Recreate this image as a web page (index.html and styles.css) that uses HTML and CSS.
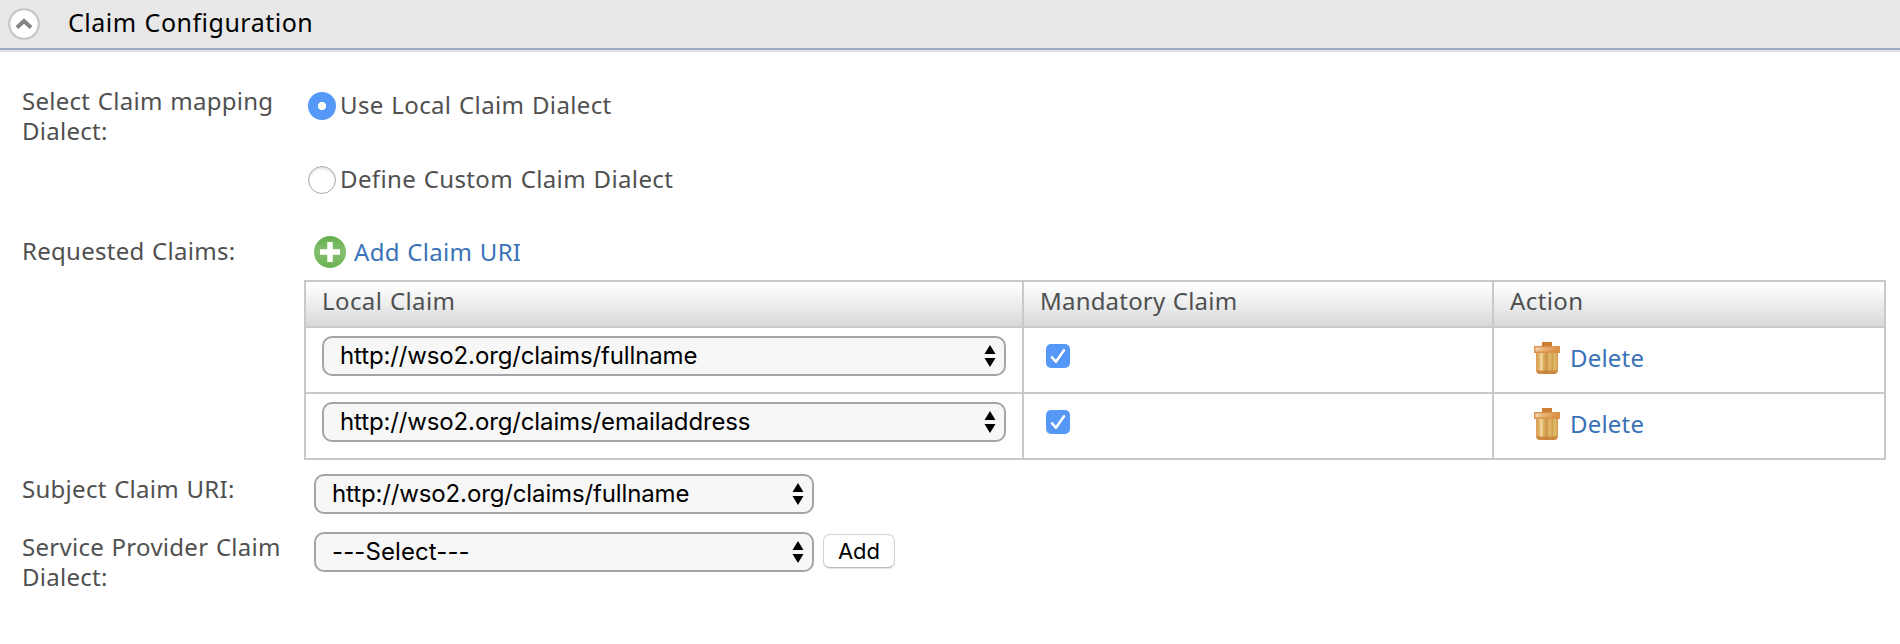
FILE: index.html
```html
<!DOCTYPE html>
<html lang="en">
<head>
<meta charset="utf-8">
<title>Claim Configuration</title>
<link rel="stylesheet" href="styles.css">
</head>
<body>
<svg class="defs" width="0" height="0" aria-hidden="true">
  <defs>
    <linearGradient id="wood" x1="0" x2="1" y1="0" y2="0">
      <stop offset="0" stop-color="#d9a05c"/><stop offset=".12" stop-color="#e0a95e"/>
      <stop offset=".24" stop-color="#f3dca4"/><stop offset=".36" stop-color="#d9ab5a"/>
      <stop offset=".5" stop-color="#cc9148"/><stop offset=".62" stop-color="#e2bd69"/>
      <stop offset=".74" stop-color="#cfa04f"/><stop offset=".87" stop-color="#e0bf6c"/>
      <stop offset="1" stop-color="#cf9048"/>
    </linearGradient>
    <linearGradient id="lid" x1="0" x2="1" y1="0" y2=".3">
      <stop offset="0" stop-color="#f8e4cc"/><stop offset=".45" stop-color="#e9b478"/><stop offset="1" stop-color="#d98f40"/>
    </linearGradient>
    <linearGradient id="leaf" x1="0" x2="0" y1="0" y2="1">
      <stop offset="0" stop-color="#64b04d"/><stop offset=".5" stop-color="#85c070"/><stop offset="1" stop-color="#69b352"/>
    </linearGradient>
    <symbol id="trash" viewBox="0 0 26 32">
      <path d="M8 4V0h10v4z" fill="#cf7f35"/>
      <path d="M2 10h22v18q0 4-4 4H6q-4 0-4-4z" fill="url(#wood)"/>
      <path d="M2.500 28.500h21q-.5 3.500-3.500 3.500H6q-3 0-3.500-3.500z" fill="#c9823a" opacity=".85"/>
      <path d="M.7 4.700h24.600v5.600H.7z" fill="url(#lid)" stroke="#d9934d" stroke-width="1.400"/>
    </symbol>
    <symbol id="updown" viewBox="0 0 12 22">
      <path d="M6 0l5.500 9H.5zM6 22L.5 13h11z"/>
    </symbol>
    <symbol id="tick" viewBox="0 0 24 24">
      <path d="M6 14.300l4 4.500L18 7.300" fill="none" stroke="#3d78c4" stroke-opacity=".5" stroke-width="2.600" stroke-linecap="round" stroke-linejoin="round"/>
      <path d="M6 13.300l4 4.500L18 6.300" fill="none" stroke="#fff" stroke-width="2.600" stroke-linecap="round" stroke-linejoin="round"/>
    </symbol>
  </defs>
</svg>

<header class="section-head">
  <svg class="collapse" viewBox="0 0 32 32">
    <circle cx="16" cy="16" r="14.800" fill="#fff" stroke="#c3c3c3" stroke-width="2"/>
    <path d="M9 19.500L16 13l7 6.500" fill="none" stroke="#858585" stroke-width="4"/>
  </svg>
  <h2 class="title">Claim Configuration</h2>
</header>

<main class="form">
  <div class="row row-dialect">
    <div class="label">Select Claim mapping Dialect:</div>
    <div class="radios">
      <label class="radio"><span class="dot dot-on"></span><span>Use Local Claim Dialect</span></label>
      <label class="radio"><span class="dot"></span><span>Define Custom Claim Dialect</span></label>
    </div>
  </div>

  <div class="row row-claims">
    <div class="label">Requested Claims:</div>
    <div class="claims">
      <a class="add-link">
        <svg class="plus" viewBox="0 0 32 32"><circle cx="16" cy="16" r="16" fill="url(#leaf)"/><path d="M16 6v20M6 16h20" stroke="#fff" stroke-width="5.500"/></svg>
        <span>Add Claim URI</span>
      </a>
      <div class="table">
        <div class="th">Local Claim</div><div class="th th-tight">Mandatory Claim</div><div class="th">Action</div>
        <div class="td"><div class="select"><span>http://wso2.org/claims/fullname</span><svg class="arrows"><use href="#updown"/></svg></div></div>
        <div class="td"><div class="check"><svg><use href="#tick"/></svg></div></div>
        <div class="td"><a class="delete"><svg class="bin"><use href="#trash"/></svg><span>Delete</span></a></div>
        <div class="td"><div class="select"><span>http://wso2.org/claims/emailaddress</span><svg class="arrows"><use href="#updown"/></svg></div></div>
        <div class="td"><div class="check"><svg><use href="#tick"/></svg></div></div>
        <div class="td"><a class="delete"><svg class="bin"><use href="#trash"/></svg><span>Delete</span></a></div>
      </div>
    </div>
  </div>

  <div class="row row-subject">
    <div class="label">Subject Claim URI:</div>
    <div class="controls">
      <div class="select"><span>http://wso2.org/claims/fullname</span><svg class="arrows"><use href="#updown"/></svg></div>
    </div>
  </div>

  <div class="row row-provider">
    <div class="label">Service Provider Claim Dialect:</div>
    <div class="controls">
      <div class="select"><span class="dashes">---Select---</span><svg class="arrows"><use href="#updown"/></svg></div>
      <button class="button">Add</button>
    </div>
  </div>
</main>
</body>
</html>
```

FILE: styles.css
```css
* { box-sizing: border-box; }

body {
  margin: 0;
  background: #fff;
  color: #505050;
  font: 24px/30px "Noto Sans", "Open Sans", sans-serif;
  letter-spacing: 0.4px;
  word-spacing: 1px;
}

svg { display: block; }
.defs { position: absolute; }

.section-head {
  display: flex;
  align-items: flex-start;
  height: 52px;
  padding: 8px 8px 0;
  gap: 28px;
  background: #e8e8e8;
  border-bottom: 2px solid #e0e0e0;
  box-shadow: inset 0 -2px #9aabc9;
}
.collapse { width: 32px; height: 32px; }
.title {
  margin: -1px 0 0;
  color: #000;
  font-size: 25px;
  font-weight: 400;
  line-height: 30px;
  letter-spacing: 0.5px;
}

.form { padding: 0 14px 0 22px; }
.row {
  display: grid;
  grid-template-columns: 282px 1fr;
}
.row-dialect { height: 184px; padding-top: 34px; }
.row-claims { height: 238px; }
.row-subject { height: 58px; }
.label { width: 262px; letter-spacing: 0.28px; }

.radios { padding: 4px 0 0 4px; }
.radio {
  display: flex;
  gap: 4px;
  height: 74px;
  letter-spacing: 0.37px;
}
.dot {
  width: 28px;
  height: 28px;
  margin-top: 2px;
  border-radius: 50%;
  border: 1px solid #aaa;
  background: #fff;
  box-shadow: inset 0 2px 2px #e4e4e4;
}
.dot-on {
  border: 0;
  background: radial-gradient(circle at 50% 50%, #fff 3.7px, #5598f7 4.5px);
  box-shadow: none;
}

.add-link {
  display: flex;
  gap: 8px;
  height: 44px;
  padding-left: 10px;
  color: #3a72b8;
  line-height: 32px;
  letter-spacing: 0.3px;
}
.plus { width: 32px; height: 32px; }

.table {
  display: grid;
  grid-template-columns: 718px 470px 392px;
  grid-template-rows: 46px 66px 66px;
  width: 1582px;
  height: 180px;
  border: 2px solid #c9c9c9;
  border-width: 2px 0 0 2px;
}
.th, .td {
  border: 2px solid #c9c9c9;
  border-width: 0 2px 2px 0;
}
.th {
  padding: 4px 0 0 16px;
  background: linear-gradient(#fff 5%, #eeefef 45%, #d8d9db);
}
.th-tight { letter-spacing: 0.2px; }
.td { padding: 8px 16px; }
.check {
  width: 24px;
  height: 24px;
  margin: 8px 0 0 6px;
  border-radius: 5px;
  background: #5598f7;
}
.check svg { width: 24px; height: 24px; }
.delete {
  display: flex;
  gap: 10px;
  padding: 6px 0 0 24px;
  color: #3a72b8;
  line-height: 32px;
  letter-spacing: 0.2px;
}
.bin { width: 26px; height: 32px; }

.select {
  display: flex;
  align-items: center;
  justify-content: space-between;
  width: 684px;
  height: 40px;
  padding: 0 8px 0 16px;
  border: 2px solid #a5a5a5;
  border-radius: 10px;
  background: #f7f7f7;
  color: #000;
  font: 24px/30px Inter, sans-serif;
  letter-spacing: -0.13px;
  word-spacing: 0;
}
.dashes { letter-spacing: 0.1px; }
.arrows { width: 12px; height: 22px; }

.controls {
  display: flex;
  gap: 9px;
  padding-left: 10px;
}
.controls .select { width: 500px; }
.button {
  width: 72px;
  height: 34px;
  margin-top: 2px;
  padding: 0;
  border: 1px solid #d2d2d2;
  border-bottom-color: #bababa;
  border-radius: 7px;
  background: #fff;
  box-shadow: 0 1px 1px #e4e4e4;
  color: #000;
  font: 22px/30px Inter, sans-serif;
}
```
